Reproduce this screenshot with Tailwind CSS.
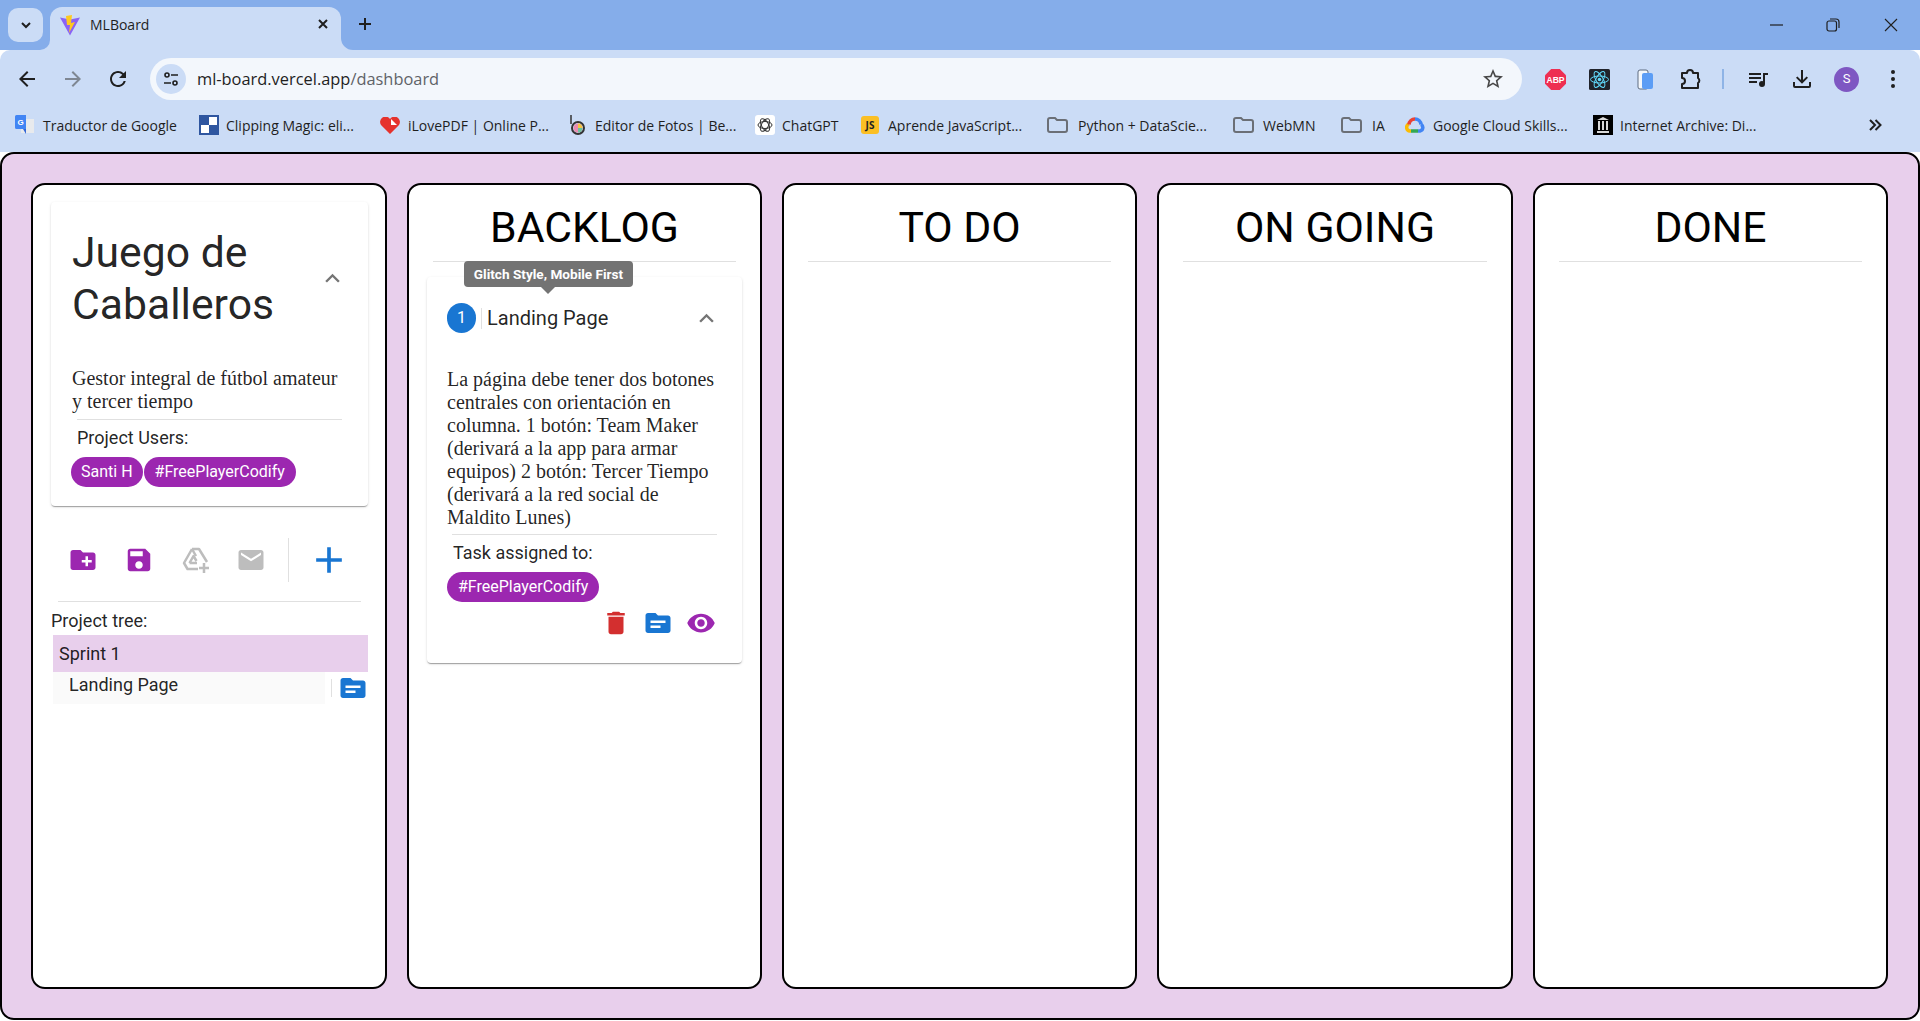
<!DOCTYPE html>
<html lang="en">
<head>
  <meta charset="UTF-8">
  <meta name="viewport" content="width=device-width, initial-scale=1.0">
  <script src="https://cdn.jsdelivr.net/npm/@tailwindcss/browser@4"></script>
  <title>MLBoard</title>
</head>
<body class="h-[1021px] w-[1920px] overflow-hidden bg-white font-['Roboto',sans-serif]">

  <!-- browser tab strip -->
  <div class="flex h-[50px] bg-[#85adea] pl-[8px] pt-[7px] font-['Open_Sans',sans-serif] text-[#1f1f1f]">
    <div class="mt-[1px] flex h-[34px] w-[35px] items-center justify-center rounded-[10px] bg-[#cbdcf6]">
      <svg width="16" height="16" viewBox="0 0 16 16" fill="none" stroke="#1f1f1f" stroke-width="2"><path d="M4 6l4 4 4-4"/></svg>
    </div>
    <div class="relative ml-[7px] flex h-[43px] w-[291px] items-start rounded-t-[12px] bg-[#cbdcf6] pl-[10px] pt-[8px]">
      <svg class="absolute bottom-0 left-[-10px]" width="10" height="10" viewBox="0 0 10 10"><path d="M10 0v10H0a10 10 0 0 0 10-10z" fill="#cbdcf6"/></svg>
      <svg class="absolute bottom-0 right-[-12px]" width="12" height="12" viewBox="0 0 12 12"><path d="M0 0v12h12a12 12 0 0 1-12-12z" fill="#cbdcf6"/></svg>
      <svg width="20" height="21" viewBox="0 0 20 21"><path d="M0 2.500L10 20.500 20 2.500 10 4.500z" fill="#8a63f5"/><path d="M6 1l6-1-1 8 4-1-6 11 1-8-3 0z" fill="#ffc91f"/></svg>
      <span class="ml-[10px] text-[14px] leading-[20px]">MLBoard</span>
      <svg class="ml-auto mr-[11px] mt-[2px]" width="14" height="14" viewBox="0 0 14 14" stroke="#1f1f1f" stroke-width="2"><path d="M3 3l8 8M11 3l-8 8"/></svg>
    </div>
    <svg class="ml-[16px] mt-[9px]" width="16" height="16" viewBox="0 0 16 16" stroke="#1f1f1f" stroke-width="2"><path d="M8 2v12M2 8h12"/></svg>
    <div class="ml-auto flex h-[36px] items-center">
      <svg class="mr-[42px]" width="14" height="14" viewBox="0 0 14 14" stroke="#1f1f1f" stroke-width="1.200"><path d="M0 7h13"/></svg>
      <svg class="mr-[44px]" width="14" height="14" viewBox="0 0 14 14" fill="none" stroke="#1f1f1f" stroke-width="1.200"><rect x="1" y="3" width="9.500" height="10" rx="2"/><path d="M4 1h6a3 3 0 0 1 3 3v6"/></svg>
      <svg class="mr-[22px]" width="14" height="14" viewBox="0 0 14 14" stroke="#1f1f1f" stroke-width="1.100"><path d="M1 1l12 12M13 1L1 13"/></svg>
    </div>
  </div>

  <!-- address bar row -->
  <div class="flex h-[58px] items-center rounded-t-[10px] bg-[#cbdcf6] text-[#1f1f1f]">
    <div class="flex w-[150px] items-center">
      <svg class="ml-[15px]" width="24" height="24" viewBox="0 0 24 24" fill="#1f1f1f"><path d="M20 11H7.830l5.590-5.590L12 4l-8 8 8 8 1.410-1.410L7.830 13H20v-2z"/></svg>
      <svg class="ml-[22px]" width="24" height="24" viewBox="0 0 24 24" fill="#7f8792"><path d="M4 11h12.170l-5.590-5.590L12 4l8 8-8 8-1.410-1.410L16.170 13H4v-2z"/></svg>
      <svg class="ml-[21px]" width="24" height="24" viewBox="0 0 24 24" fill="#1f1f1f"><path d="M17.650 6.350A7.958 7.958 0 0 0 12 4c-4.420 0-7.990 3.580-7.990 8s3.570 8 7.990 8c3.730 0 6.840-2.550 7.730-6h-2.080A5.990 5.990 0 0 1 12 18c-3.310 0-6-2.690-6-6s2.690-6 6-6c1.660 0 3.140.690 4.220 1.780L13 11h7V4l-2.350 2.350z"/></svg>
    </div>
    <div class="flex h-[42px] w-[1372px] items-center rounded-full bg-[#f3f7fc] font-['Open_Sans',sans-serif]">
      <div class="ml-[6px] flex h-[30px] w-[30px] items-center justify-center rounded-full bg-[#cbdcf6]">
        <svg width="18" height="18" viewBox="0 0 18 18" fill="none" stroke="#1f1f1f" stroke-width="1.600"><circle cx="5" cy="5" r="2"/><path d="M9 5h7M2 13h7"/><circle cx="13" cy="13" r="2"/></svg>
      </div>
      <span class="ml-[11px] mt-[1px] text-[16.400px]">ml-board.vercel.app<span class="text-[#5f6368]">/dashboard</span></span>
      <svg class="ml-auto mr-[17px]" width="24" height="24" viewBox="0 0 24 24" fill="#474747"><path d="M22 9.240l-7.190-.620L12 2 9.190 8.630 2 9.240l5.460 4.730L5.820 21 12 17.270 18.180 21l-1.630-7.030L22 9.240zM12 15.400l-3.760 2.270 1-4.280-3.320-2.880 4.380-.380L12 6.100l1.710 4.040 4.380.380-3.320 2.880 1 4.280L12 15.400z"/></svg>
    </div>
    <div class="flex flex-1 items-center">
      <svg class="ml-[23px]" width="21" height="21" viewBox="0 0 22 22"><path d="M6.500 0h9L22 6.500v9L15.500 22h-9L0 15.500v-9z" fill="#ee2f52"/><text x="11" y="15" text-anchor="middle" font-family="Liberation Sans" font-weight="700" font-size="9" fill="#fff">ABP</text></svg>
      <svg class="ml-[23px]" width="21" height="21" viewBox="0 0 21 21"><rect width="21" height="21" rx="1.500" fill="#20232a"/><g fill="none" stroke="#61dafb" stroke-width="1"><ellipse cx="10.500" cy="10.500" rx="9" ry="3.500"/><ellipse cx="10.500" cy="10.500" rx="9" ry="3.500" transform="rotate(60 10.500 10.500)"/><ellipse cx="10.500" cy="10.500" rx="9" ry="3.500" transform="rotate(120 10.500 10.500)"/></g><circle cx="10.500" cy="10.500" r="1.800" fill="#61dafb"/></svg>
      <svg class="ml-[27px]" width="17" height="21" viewBox="0 0 17 21"><rect x="1" y="1" width="10" height="19" rx="2" fill="#f3f7fc" stroke="#5f6c80"/><rect x="5" y="4" width="11" height="16" rx="2" fill="#5c9df5"/></svg>
      <svg class="ml-[24px]" width="24" height="24" viewBox="0 0 24 24" fill="none" stroke="#1f1f1f" stroke-width="2"><path d="M4 6h5a3 3 0 0 1 6 0h5v5a3 3 0 0 1 0 5v5H4v-4a3 3 0 0 0 0-6z" stroke-linejoin="round"/></svg>
      <div class="ml-[20px] h-[20px] w-[2px] bg-[#8fb4e6]"></div>
      <svg class="ml-[22px]" width="24" height="24" viewBox="0 0 24 24" fill="#1f1f1f"><path d="M15 6H3v2h12V6zm0 4H3v2h12v-2zM3 16h8v-2H3v2zM17 6v8.180A3 3 0 0 0 16 14a3 3 0 1 0 3 3V8h3V6h-5z"/></svg>
      <svg class="ml-[20px]" width="24" height="24" viewBox="0 0 24 24" fill="#1f1f1f"><path d="M11 3h2v10l3.600-3.600L18 10.800l-6 6-6-6 1.400-1.400L11 13zM3 15h2v4h14v-4h2v4a2 2 0 0 1-2 2H5a2 2 0 0 1-2-2z"/></svg>
      <div class="ml-[20px] flex h-[25px] w-[25px] items-center justify-center rounded-full bg-[#7e57c2] text-[13px] text-white">S</div>
      <svg class="ml-[31px]" width="6" height="22" viewBox="0 0 6 22" fill="#1f1f1f"><circle cx="3" cy="4" r="2"/><circle cx="3" cy="11" r="2"/><circle cx="3" cy="18" r="2"/></svg>
    </div>
  </div>

  <!-- bookmarks -->
  <div class="flex h-[44px] items-center bg-[#cbdcf6] pb-[10px] pl-[15px] font-['Open_Sans',sans-serif] text-[14px] text-[#1f1f1f]">
    <div class="flex w-[184px] items-center gap-[9px]">
      <svg width="19" height="20" viewBox="0 0 19 20"><rect x="6" y="4" width="13" height="14" fill="#e8eaed"/><path d="M1.500 0H11v14H1.500A1.500 1.500 0 0 1 0 12.500v-11A1.500 1.500 0 0 1 1.500 0z" fill="#4285f4"/><path d="M8 14l3 5v-5z" fill="#3367d6"/><text x="5.500" y="10" text-anchor="middle" font-family="Liberation Sans" font-weight="700" font-size="8" fill="#fff">G</text></svg>
      <span>Traductor de Google</span>
    </div>
    <div class="flex w-[181px] items-center gap-[7px]">
      <svg width="20" height="20" viewBox="0 0 20 20"><rect width="20" height="20" fill="#2f56a0"/><rect x="10" y="2" width="8" height="8" fill="#fff"/><rect x="2" y="10" width="8" height="8" fill="#fff"/></svg>
      <span>Clipping Magic: eli...</span>
    </div>
    <div class="flex w-[190px] items-center gap-[8px]">
      <svg width="20" height="17" viewBox="0 0 20 17"><path d="M10 17L1 8A5 5 0 0 1 10 2a5 5 0 0 1 9 6z" fill="#e5322d"/><path d="M11 2l6 6h-6z" fill="#fff"/></svg>
      <span>iLovePDF | Online P...</span>
    </div>
    <div class="flex w-[185px] items-center gap-[10px]">
      <svg width="15" height="20" viewBox="0 0 15 20"><path d="M1 0v9" stroke="#333" stroke-width="1.500"/><circle cx="8" cy="13" r="6" fill="none" stroke="#333" stroke-width="2"/><circle cx="8" cy="13" r="4.500" fill="#e98bb0"/><path d="M8 13V8.500a4.500 4.500 0 0 1 4.500 4.500z" fill="#f4c542"/><path d="M8 13h4.500A4.500 4.500 0 0 1 8 17.500z" fill="#6cc3a0"/></svg>
      <span>Editor de Fotos | Be...</span>
    </div>
    <div class="flex w-[106px] items-center gap-[7px]">
      <div class="flex h-[20px] w-[20px] items-center justify-center rounded-[3px] bg-white">
        <svg width="16" height="16" viewBox="0 0 16 16" fill="none" stroke="#333" stroke-width="1"><ellipse cx="8" cy="8" rx="7" ry="3.500"/><ellipse cx="8" cy="8" rx="7" ry="3.500" transform="rotate(60 8 8)"/><ellipse cx="8" cy="8" rx="7" ry="3.500" transform="rotate(120 8 8)"/></svg>
      </div>
      <span>ChatGPT</span>
    </div>
    <div class="flex w-[186px] items-center gap-[9px]">
      <div class="flex h-[18px] w-[18px] items-center justify-center rounded-[3px] bg-[#fbbf24] text-[10px] font-bold text-[#222]">JS</div>
      <span>Aprende JavaScript...</span>
    </div>
    <div class="flex w-[186px] items-center gap-[10px]">
      <svg width="21" height="16" viewBox="0 0 21 16" fill="none" stroke="#6b6f76" stroke-width="2"><path d="M1 3a2 2 0 0 1 2-2h5l2 2h8a2 2 0 0 1 2 2v8a2 2 0 0 1-2 2H3a2 2 0 0 1-2-2z"/></svg>
      <span>Python + DataScie...</span>
    </div>
    <div class="flex w-[108px] items-center gap-[9px]">
      <svg width="21" height="16" viewBox="0 0 21 16" fill="none" stroke="#6b6f76" stroke-width="2"><path d="M1 3a2 2 0 0 1 2-2h5l2 2h8a2 2 0 0 1 2 2v8a2 2 0 0 1-2 2H3a2 2 0 0 1-2-2z"/></svg>
      <span>WebMN</span>
    </div>
    <div class="flex w-[64px] items-center gap-[10px]">
      <svg width="21" height="16" viewBox="0 0 21 16" fill="none" stroke="#6b6f76" stroke-width="2"><path d="M1 3a2 2 0 0 1 2-2h5l2 2h8a2 2 0 0 1 2 2v8a2 2 0 0 1-2 2H3a2 2 0 0 1-2-2z"/></svg>
      <span>IA</span>
    </div>
    <div class="flex w-[188px] items-center gap-[8px]">
      <svg width="20" height="16" viewBox="0 0 20 16" fill="none" stroke-width="3.500"><path d="M6 14H5a3.500 3.500 0 0 1-1-6.800" stroke="#fbbc04"/><path d="M4 7.500A6 6 0 0 1 10 2" stroke="#ea4335"/><path d="M10 2a6 6 0 0 1 6 5.500" stroke="#4285f4"/><path d="M16 7.500A3.500 3.500 0 0 1 15 14H13" stroke="#4285f4"/><path d="M6 14h7" stroke="#34a853"/></svg>
      <span>Google Cloud Skills...</span>
    </div>
    <div class="flex items-center gap-[7px]">
      <svg width="20" height="20" viewBox="0 0 20 20"><rect width="20" height="20" fill="#000"/><path d="M4 5l6-3 6 3zM4 16h12v2H4zM5 6h2v9H5zM9 6h2v9H9zM13 6h2v9h-2z" fill="#d8d8d8"/></svg>
      <span>Internet Archive: Di...</span>
    </div>
    <svg class="ml-auto mr-[38px]" width="14" height="14" viewBox="0 0 14 14" fill="none" stroke="#1f1f1f" stroke-width="2"><path d="M2 2l5 5-5 5M7.500 2l5 5-5 5"/></svg>
  </div>

  <!-- board -->
  <main class="flex h-[868px] gap-[20px] rounded-[14px] border-2 border-black bg-[#e8cfec] px-[29px] py-[29px]">

    <section class="flex w-[356px] flex-col rounded-[14px] border-2 border-black bg-white pl-[18px] pr-[17px] pt-[17px]">
      <div class="rounded-[4px] pb-[19px] pl-[21px] pr-[26px] pt-[24px] shadow-[0_2px_1px_-1px_rgba(0,0,0,0.2),0_1px_1px_0_rgba(0,0,0,0.14),0_1px_3px_0_rgba(0,0,0,0.12)]">
        <div class="flex items-center justify-between">
          <h3 class="w-[220px] text-[42.700px] leading-[52.300px] text-black/87">Juego de Caballeros</h3>
          <svg class="mr-[-5px] mt-[1px]" width="29" height="29" viewBox="0 0 24 24" fill="#757575"><path d="M12 8l-6 6 1.410 1.410L12 10.830l4.590 4.580L18 14z"/></svg>
        </div>
        <p class="mt-[36px] w-[272px] font-['Liberation_Serif',serif] text-[20px] leading-[23.300px] text-black/87">Gestor integral de fútbol amateur y tercer tiempo</p>
        <div class="ml-[5px] mt-[6px] border-t border-[#e0e0e0]"></div>
        <p class="ml-[5px] mt-[8px] text-[18px] leading-[20px] text-black/87">Project Users:</p>
        <div class="ml-[-1px] mt-[9px] flex">
          <span class="flex h-[30px] items-center rounded-full bg-[#9c27b0] px-[10px] text-[16px] text-white">Santi H</span>
          <span class="ml-[1px] flex h-[30px] items-center rounded-full bg-[#9c27b0] px-[11px] text-[16px] text-white">#FreePlayerCodify</span>
        </div>
      </div>

      <div class="mt-[32px] flex h-[44px] items-center pl-[17px]">
        <svg width="30" height="30" viewBox="0 0 24 24" fill="#9c27b0"><path d="M20 6h-8l-2-2H4c-1.110 0-1.990.890-1.990 2L2 18c0 1.110.890 2 2 2h16c1.110 0 2-.890 2-2V8c0-1.110-.890-2-2-2zm-1 8h-3v3h-2v-3h-3v-2h3V9h2v3h3v2z"/></svg>
        <svg class="ml-[26px]" width="30" height="30" viewBox="0 0 24 24" fill="#9c27b0"><path d="M17 3H5c-1.110 0-2 .900-2 2v14c0 1.100.890 2 2 2h14c1.100 0 2-.900 2-2V7l-4-4zm-5 16c-1.660 0-3-1.340-3-3s1.340-3 3-3 3 1.340 3 3-1.340 3-3 3zm3-10H5V5h10v4z"/></svg>
        <svg class="ml-[27px]" width="30" height="30" viewBox="0 0 30 30" fill="none" stroke="#bdbdbd" stroke-width="2.500" stroke-linejoin="round"><path d="M11 4h7l8 13M11 4L3 18l3.500 6H17M11 4l4 7"/><path d="M8.500 18l4-7 3 5M8.500 18H16"/><path d="M23 18v10M18 23h10"/></svg>
        <svg class="ml-[25px]" width="30" height="30" viewBox="0 0 24 24" fill="#bdbdbd"><path d="M20 4H4c-1.100 0-1.990.900-1.990 2L2 18c0 1.100.900 2 2 2h16c1.100 0 2-.900 2-2V6c0-1.100-.900-2-2-2zm0 4l-8 5-8-5V6l8 5 8-5v2z"/></svg>
        <div class="ml-[22px] h-[44px] w-px bg-[#e0e0e0]"></div>
        <svg class="ml-[18px]" width="44" height="44" viewBox="0 0 24 24" fill="#1976d2"><path d="M19 13h-6v6h-2v-6H5v-2h6V5h2v6h6v2z"/></svg>
      </div>

      <div class="mx-[7px] mt-[19px] border-t border-[#e0e0e0]"></div>
      <p class="mt-[8px] text-[18px] leading-[22px] text-black/87">Project tree:</p>
      <div class="ml-[2px] mt-[3px] flex h-[37px] w-[315px] items-center bg-[#e8cfec] pl-[6px] text-[18px] text-black/87">Sprint 1</div>
      <div class="ml-[2px] flex w-[315px]">
        <div class="h-[32px] w-[272px] bg-[#fafafa] pl-[16px] pt-[2px] text-[18px] leading-[22px] text-black/87">Landing Page</div>
        <div class="ml-[6px] mt-[7px] h-[18px] w-px bg-[#e0e0e0]"></div>
        <svg class="ml-[6px] mt-[1px]" width="30" height="30" viewBox="0 0 24 24" fill="#1976d2"><path d="M20 6h-8l-2-2H4c-1.100 0-1.990.900-1.990 2L2 18c0 1.100.900 2 2 2h16c1.100 0 2-.900 2-2V8c0-1.100-.900-2-2-2zm-6 10H6v-2h8v2zm4-4H6v-2h12v2z"/></svg>
      </div>
    </section>

    <section class="flex w-[355px] flex-col rounded-[14px] border-2 border-black bg-white px-[18px]">
      <h2 class="pt-[16px] text-center text-[42.700px] leading-[52px] text-black">BACKLOG</h2>
      <div class="mx-[6px] mt-[8px] border-t border-[#e0e0e0]"></div>
      <div class="relative mt-[15px] rounded-[4px] pb-[25px] shadow-[0_2px_1px_-1px_rgba(0,0,0,0.2),0_1px_1px_0_rgba(0,0,0,0.14),0_1px_3px_0_rgba(0,0,0,0.12)]">
        <div class="absolute left-[37px] top-[-16px] flex h-[26px] w-[169px] items-center justify-center rounded-[4px] bg-[#737373] text-[13.600px] font-bold text-white">
          Glitch Style, Mobile First
          <span class="absolute bottom-[-7px] left-[77px] h-0 w-0 border-x-[7px] border-t-[7px] border-x-transparent border-t-[#737373]"></span>
        </div>
        <div class="flex items-center pl-[20px] pr-[21px] pt-[26px]">
          <div class="flex h-[30px] w-[29px] items-center justify-center rounded-full bg-[#1976d2] text-[16px] text-white">1</div>
          <div class="ml-[5px] h-[21px] w-px bg-[#e0e0e0]"></div>
          <span class="ml-[5px] text-[20px] leading-[30px] text-black/87">Landing Page</span>
          <svg class="ml-auto" width="29" height="29" viewBox="0 0 24 24" fill="#757575"><path d="M12 8l-6 6 1.410 1.410L12 10.830l4.590 4.580L18 14z"/></svg>
        </div>
        <p class="ml-[20px] mt-[35px] w-[272px] font-['Liberation_Serif',serif] text-[20px] leading-[23px] text-black/87">La página debe tener dos botones centrales con orientación en columna. 1 botón: Team Maker (derivará a la app para armar equipos) 2 botón: Tercer Tiempo (derivará a la red social de Maldito Lunes)</p>
        <div class="mx-[25px] mt-[5px] border-t border-[#e0e0e0]"></div>
        <p class="ml-[26px] mt-[8px] text-[18px] leading-[20px] text-black/87">Task assigned to:</p>
        <div class="ml-[20px] mt-[9px] flex">
          <span class="flex h-[30px] items-center rounded-full bg-[#9c27b0] px-[11px] text-[16px] text-white">#FreePlayerCodify</span>
        </div>
        <div class="mt-[6px] flex justify-end pr-[26px]">
          <svg width="30" height="30" viewBox="0 0 24 24" fill="#d32f2f"><path d="M6 19c0 1.100.900 2 2 2h8c1.100 0 2-.900 2-2V7H6v12zM19 4h-3.500l-1-1h-5l-1 1H5v2h14V4z"/></svg>
          <svg class="ml-[12px]" width="30" height="30" viewBox="0 0 24 24" fill="#1976d2"><path d="M20 6h-8l-2-2H4c-1.100 0-1.990.900-1.990 2L2 18c0 1.100.900 2 2 2h16c1.100 0 2-.900 2-2V8c0-1.100-.900-2-2-2zm-6 10H6v-2h8v2zm4-4H6v-2h12v2z"/></svg>
          <svg class="ml-[13px]" width="30" height="30" viewBox="0 0 24 24" fill="#9c27b0"><path d="M12 4.500C7 4.500 2.730 7.610 1 12c1.730 4.390 6 7.500 11 7.500s9.270-3.110 11-7.500c-1.730-4.390-6-7.500-11-7.500zM12 17c-2.760 0-5-2.240-5-5s2.240-5 5-5 5 2.240 5 5-2.240 5-5 5zm0-8c-1.660 0-3 1.340-3 3s1.340 3 3 3 3-1.340 3-3-1.340-3-3-3z"/></svg>
        </div>
      </div>
    </section>

    <section class="flex w-[355px] flex-col rounded-[14px] border-2 border-black bg-white px-[18px]">
      <h2 class="pt-[16px] text-center text-[42.700px] leading-[52px] text-black">TO DO</h2>
      <div class="mx-[6px] mt-[8px] border-t border-[#e0e0e0]"></div>
    </section>
    <section class="flex w-[356px] flex-col rounded-[14px] border-2 border-black bg-white px-[18px]">
      <h2 class="pt-[16px] text-center text-[42.700px] leading-[52px] text-black">ON GOING</h2>
      <div class="mx-[6px] mt-[8px] border-t border-[#e0e0e0]"></div>
    </section>
    <section class="flex w-[355px] flex-col rounded-[14px] border-2 border-black bg-white px-[18px]">
      <h2 class="pt-[16px] text-center text-[42.700px] leading-[52px] text-black">DONE</h2>
      <div class="mx-[6px] mt-[8px] border-t border-[#e0e0e0]"></div>
    </section>
  </main>
</body>
</html>
